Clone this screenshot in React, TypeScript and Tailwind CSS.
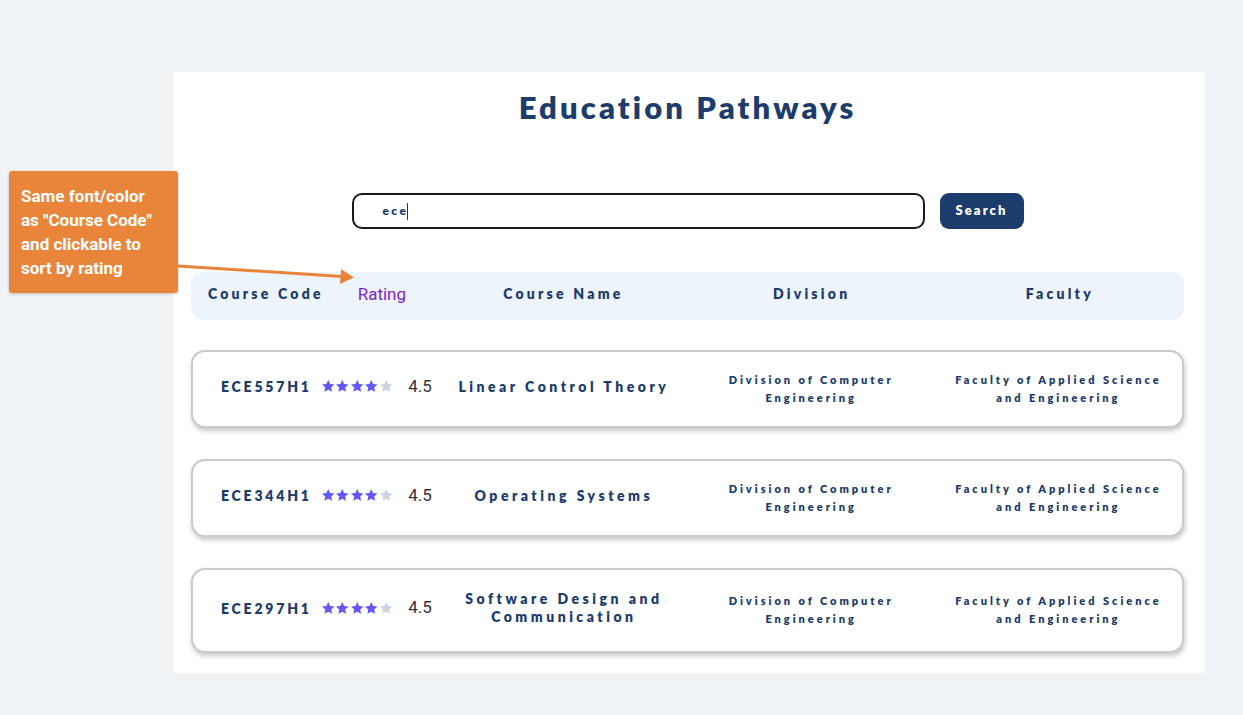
import React from "react";

const courses = [
  { code: "ECE557H1", name: "Linear Control Theory", rating: 4.5 },
  { code: "ECE344H1", name: "Operating Systems", rating: 4.5 },
  { code: "ECE297H1", name: "Software Design and Communication", rating: 4.5 },
];

function Star({ filled }: { filled: boolean }) {
  return (
    <svg width="14.5" height="14.5" viewBox="0 0 24 24" className={filled ? "fill-[#6357f6]" : "fill-[#cdd3dc]"}>
      <path d="M12 1.8l3.1 6.6 7.2.8-5.4 4.9 1.5 7.1L12 17.6l-6.4 3.6 1.5-7.1-5.4-4.9 7.2-.8z" />
    </svg>
  );
}

function Stars({ value }: { value: number }) {
  return (
    <div className="flex items-center">
      {[1, 2, 3, 4, 5].map((i) => (
        <Star key={i} filled={i <= Math.floor(value)} />
      ))}
    </div>
  );
}

export default function App() {
  const main = { fontFamily: "Lato, 'Noto Sans', sans-serif" };
  const din = { fontFamily: "Roboto, 'Noto Sans', sans-serif" };

  return (
    <div className="relative min-h-[715px] w-full bg-[#eff3f6] pt-[72px] pb-[42px]" style={main}>
      <div className="ml-[173px] w-[1032px] h-[601px] bg-white pt-[18px] pl-[18px] pr-[21px]">
        <h1 className="text-center text-[31px] font-extrabold tracking-[0.1em] text-[#1c3c6c] leading-[34px]">
          Education Pathways
        </h1>

        <div className="mt-[69px] flex items-center justify-center gap-[15px]">
          <div className="w-[573px] h-[36px] rounded-[10px] border-2 border-[#1a1a1a] flex items-center pl-[29px]">
            <span className="text-[12px] font-extrabold tracking-[0.2em] text-[#1c3c6c]">ece</span>
            <span className="w-px h-[17px] bg-[#1c3c6c] -ml-[1px]" />
          </div>
          <button className="w-[84px] h-[36px] rounded-[9px] bg-[#1c3c6c] text-white text-[13px] font-extrabold tracking-[0.16em]">
            Search
          </button>
        </div>

        <div className="mt-[43px] h-[48px] pb-[6px] rounded-[12px] bg-[#eef4fc] grid grid-cols-4 items-center text-[14px] font-extrabold tracking-[0.23em] text-[#1c3c6c]">
          <div className="flex items-center pl-[17px]">
            <span>Course Code</span>
            <button className="ml-[34px] mt-[4px] text-[17px] font-normal tracking-normal text-[#7b1fd0]" style={din}>
              Rating
            </button>
          </div>
          <div className="text-center">Course Name</div>
          <div className="text-center">Division</div>
          <div className="text-center">Faculty</div>
        </div>

        <div className="mt-[30px] flex flex-col gap-[31px]">
          {courses.map((c, idx) => (
            <div
              key={c.code}
              className={`grid grid-cols-4 items-center pb-[5px] rounded-[14px] border-2 border-[#cacaca] bg-white shadow-[1px_3px_5px_rgba(0,0,0,0.22)] text-[#1c3c6c] ${
                idx === 2 ? "h-[85px]" : "h-[78px]"
              }`}
            >
              <div className="flex items-center pl-[28px]">
                <span className="text-[14px] font-extrabold tracking-[0.2em]">{c.code}</span>
                <div className="ml-[9px]">
                  <Stars value={c.rating} />
                </div>
                <span className="ml-[15px] text-[17px] text-[#333] font-normal" style={din}>
                  {c.rating}
                </span>
              </div>
              <div className="text-center text-[14px] font-extrabold tracking-[0.25em] leading-[18px] px-[12px]">
                {c.name}
              </div>
              <div className="mt-[4px] text-center text-[11px] font-extrabold tracking-[0.27em] leading-[18px] px-[30px]">
                Division of Computer Engineering
              </div>
              <div className="mt-[4px] text-center text-[11px] font-extrabold tracking-[0.27em] leading-[18px] px-[12px]">
                Faculty of Applied Science and Engineering
              </div>
            </div>
          ))}
        </div>
      </div>

      <div
        className="absolute left-[9px] top-[171px] w-[169px] h-[122px] rounded-[3px] bg-[#e9843b] pl-[12px] pt-[13px] text-white text-[17px] font-bold leading-[24px] shadow-[0_1px_3px_rgba(0,0,0,0.2)]"
        style={din}
      >
        Same font/color
        <br />
        as "Course Code"
        <br />
        and clickable to
        <br />
        sort by rating
      </div>
      <svg className="absolute left-[176px] top-[258px]" width="182" height="28" viewBox="0 0 182 28">
        <line x1="2" y1="8" x2="166" y2="18.5" stroke="#e9843b" strokeWidth="3" />
        <path d="M165 11 L178 19.5 L164 26 Z" fill="#e9843b" />
      </svg>
    </div>
  );
}
